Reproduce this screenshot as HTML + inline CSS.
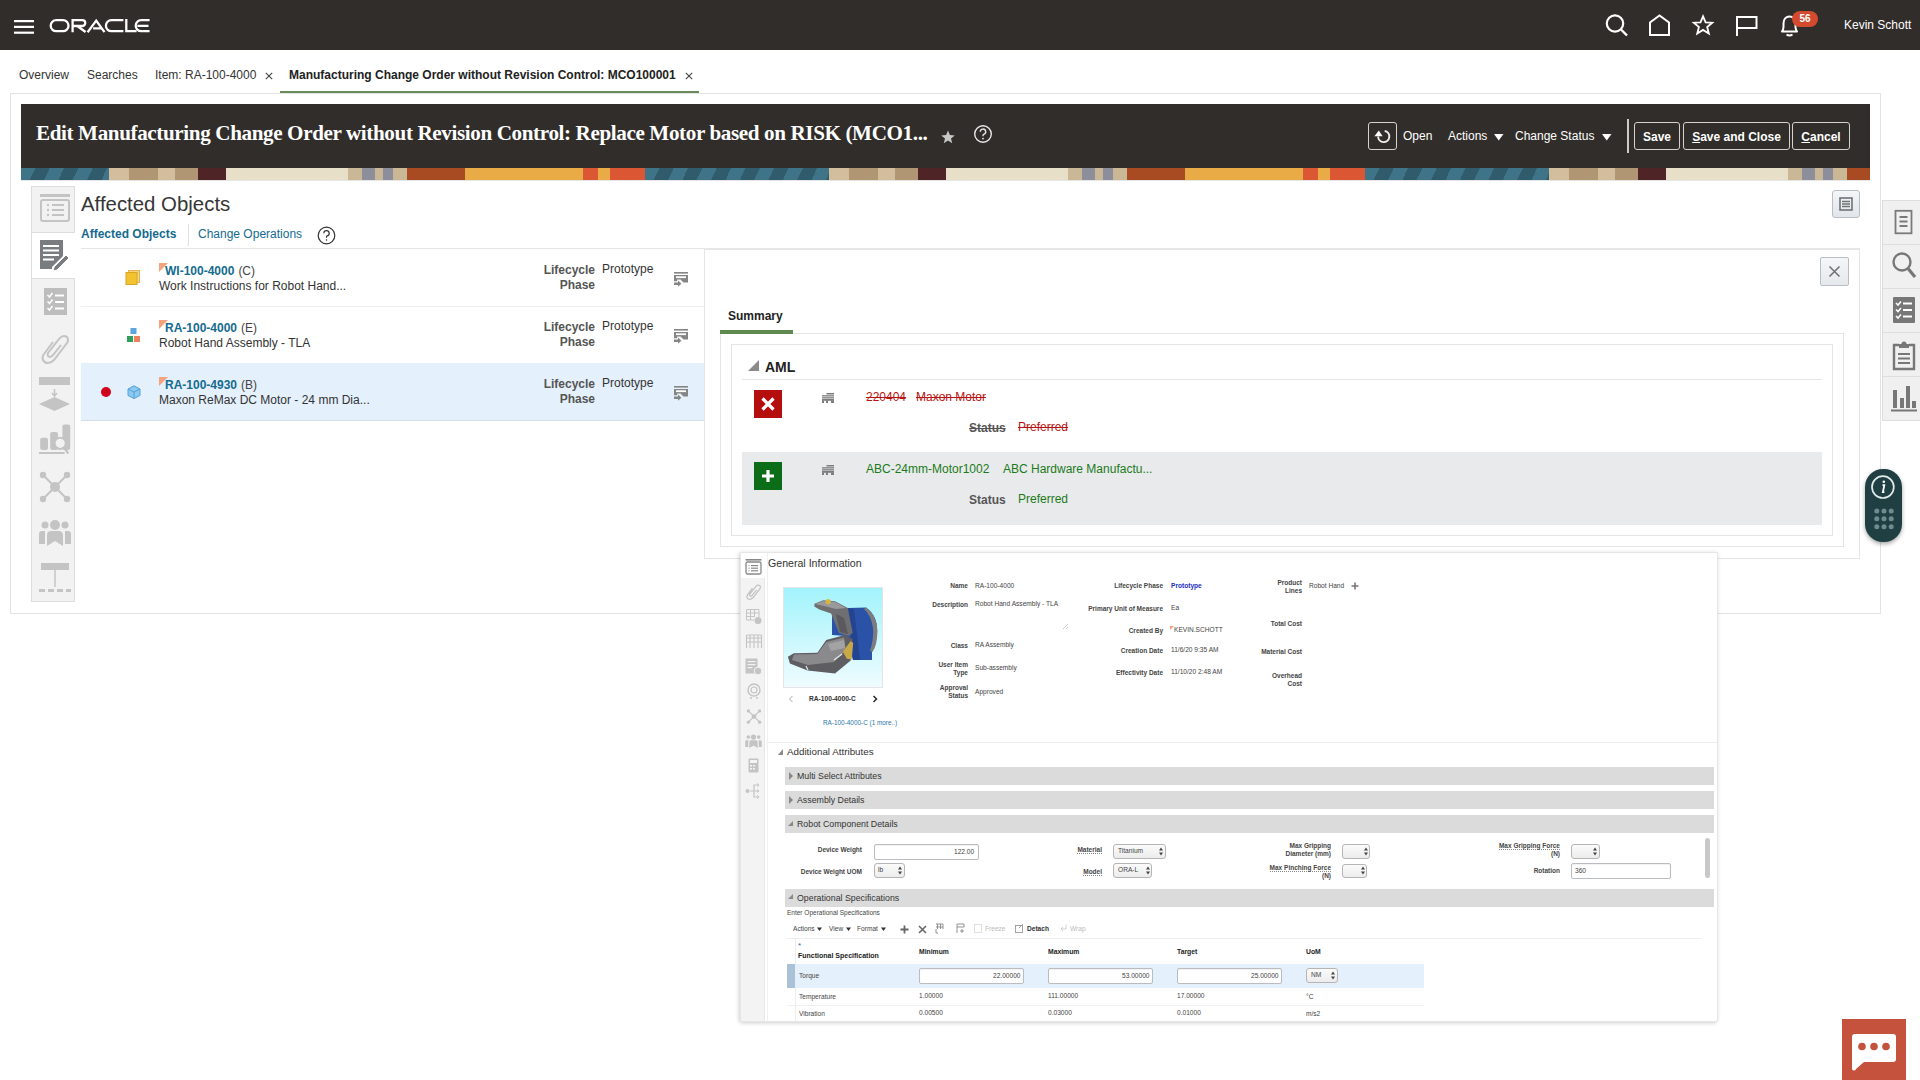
<!DOCTYPE html>
<html><head><meta charset="utf-8">
<style>
*{box-sizing:border-box;margin:0;padding:0}
html,body{width:1920px;height:1080px;overflow:hidden;background:#fff;font-family:"Liberation Sans",sans-serif;color:#333;font-size:12px}
.a{position:absolute;white-space:nowrap}
.b{font-weight:bold}
.lnk{color:#146b8f}
svg{position:absolute;overflow:visible}
.btnd{position:absolute;border:1.5px solid #d6d2cf;border-radius:3px;height:28px;top:122px;color:#fff;font-weight:bold;font-size:12px;text-align:center;line-height:28px}
</style></head><body>
<!-- HEADER -->
<div class="a" style="left:0;top:0;width:1920px;height:50px;background:#312d2a"></div>
<svg style="left:14px;top:20px" width="21" height="14"><rect x="0" y="0" width="20" height="2.2" fill="#fff"/><rect x="0" y="5.8" width="20" height="2.2" fill="#fff"/><rect x="0" y="11.6" width="20" height="2.2" fill="#fff"/></svg>
<svg style="left:44px;top:12px" width="112" height="28" viewBox="44 12 112 28"><g fill="none" stroke="#fff" stroke-width="2.3">
<rect x="50.7" y="20.2" width="17.8" height="11" rx="5.5"/>
<path d="M72.6 32.2V20.1H82.3A2.95 2.95 0 0 1 82.3 26H73.4M77.6 26.2L85.6 32"/>
<path d="M87.6 32.2L96.2 20.6L104.5 32.2M93.1 28.3H102.6" stroke-linejoin="miter" stroke-miterlimit="10"/>
<path d="M123.4 31.2H111.4A5.5 5.5 0 0 1 111.4 20.2H123.4"/>
<path d="M126.3 19V31.2H136.6"/>
<path d="M149.6 31.2H141.2A5.5 5.5 0 0 1 141.2 20.2H149.6M137.4 25.8H148.5"/>
</g></svg>
<svg style="left:1604px;top:13px" width="26" height="24" viewBox="0 0 26 24"><circle cx="11" cy="10.5" r="8.2" fill="none" stroke="#fff" stroke-width="2.2"/><path d="M17 16.5L23 22.5" stroke="#fff" stroke-width="2.4"/></svg>
<svg style="left:1648px;top:13px" width="26" height="24" viewBox="0 0 26 24"><path d="M2 22V9.5L11.5 2.5L21 9.5V22Z" fill="none" stroke="#fff" stroke-width="2"/></svg>
<svg style="left:1691px;top:14px" width="25" height="22" viewBox="0 0 26 24"><path d="M12.5 2.5L15.3 9.2L22.5 9.5L17 14.2L18.8 21.3L12.5 17.3L6.2 21.3L8 14.2L2.5 9.5L9.7 9.2Z" fill="none" stroke="#fff" stroke-width="2" stroke-linejoin="miter"/></svg>
<svg style="left:1734px;top:13px" width="26" height="24" viewBox="0 0 26 24"><path d="M3 23V3M3 4H22.5V15H3" fill="none" stroke="#fff" stroke-width="2"/></svg>
<svg style="left:1778px;top:13px" width="26" height="24" viewBox="0 0 26 24"><path d="M4 18.5C6 16.5 5.5 13 5.5 10.5C5.5 6.5 8 3.5 11.5 3.5C15 3.5 17.5 6.5 17.5 10.5C17.5 13 17 16.5 19 18.5Z" fill="none" stroke="#fff" stroke-width="2" stroke-linejoin="round"/><path d="M8.5 21.5Q11.5 23.5 14.5 21.5" fill="none" stroke="#fff" stroke-width="2"/></svg>
<div class="a" style="left:1792px;top:11px;width:26px;height:16px;border-radius:8px;background:#d34a2f;color:#fff;font:bold 10px 'Liberation Sans',sans-serif;text-align:center;line-height:16px">56</div>
<div class="a" style="left:1844px;top:17.5px;color:#fff;font-size:12px">Kevin Schott</div>
<!-- TABS -->
<div class="a" style="left:19px;top:68px">Overview</div>
<div class="a" style="left:87px;top:68px">Searches</div>
<div class="a" style="left:155px;top:68px">Item: RA-100-4000</div>
<svg style="left:265px;top:72px" width="8" height="8"><path d="M0.8 0.8L7.2 7.2M7.2 0.8L0.8 7.2" stroke="#444" stroke-width="1.1"/></svg>
<div class="a b" style="left:289px;top:68px;color:#222">Manufacturing Change Order without Revision Control: MCO100001</div>
<svg style="left:685px;top:72px" width="8" height="8"><path d="M0.8 0.8L7.2 7.2M7.2 0.8L0.8 7.2" stroke="#444" stroke-width="1.1"/></svg>
<div class="a" style="left:280px;top:91px;width:419px;height:3px;background:#6a8a5a"></div>
<!-- container -->
<div class="a" style="left:10px;top:93px;width:1871px;height:521px;border:1px solid #e0e2e4"></div>
<!-- title bar -->
<div class="a" style="left:21px;top:104px;width:1849px;height:64px;background:#312d2a"></div>
<div class="a" style="left:21px;top:168px;width:1849px;height:12px;background:repeating-linear-gradient(90deg,#3f7488 0,#3f7488 184px,#d2be9c 184px,#d2be9c 204px,#b09673 204px,#b09673 233px,#d2be9c 233px,#d2be9c 250px,#b09673 250px,#b09673 273px,#4e2426 273px,#4e2426 301px,#e8dfc8 301px,#e8dfc8 423px,#c9b796 423px,#c9b796 437px,#8d8e9b 437px,#8d8e9b 450px,#c9b796 450px,#c9b796 458px,#8d8e9b 458px,#8d8e9b 468px,#c9b796 468px,#c9b796 482px,#a84a22 482px,#a84a22 540px,#e9ab46 540px,#e9ab46 658px,#db5733 658px,#db5733 673px,#e9ab46 673px,#e9ab46 685px,#db5733 685px,#db5733 720px);background-position:-96px 0;background-size:720px 12px"></div>
<div class="a" style="left:21px;top:168px;width:88px;height:12px;background:repeating-linear-gradient(115deg,rgba(20,40,50,0) 0,rgba(20,40,50,0) 13px,rgba(20,45,55,.35) 13px,rgba(20,45,55,.35) 26px)"></div><div class="a" style="left:645px;top:168px;width:184px;height:12px;background:repeating-linear-gradient(115deg,rgba(20,40,50,0) 0,rgba(20,40,50,0) 13px,rgba(20,45,55,.35) 13px,rgba(20,45,55,.35) 26px)"></div><div class="a" style="left:1365px;top:168px;width:184px;height:12px;background:repeating-linear-gradient(115deg,rgba(20,40,50,0) 0,rgba(20,40,50,0) 13px,rgba(20,45,55,.35) 13px,rgba(20,45,55,.35) 26px)"></div>
<div class="a" style="left:21px;top:180px;width:1849px;height:1px;background:#e6e6e6"></div>
<div class="a" style="left:36px;top:120px;font:bold 22px 'Liberation Serif',serif;letter-spacing:-0.4px;color:#fff;transform:scaleX(0.96);transform-origin:0 0">Edit Manufacturing Change Order without Revision Control: Replace Motor based on RISK (MCO1...</div>
<svg style="left:940px;top:129px" width="16" height="16" viewBox="0 0 16 16"><path d="M8 1.5L9.9 6.1L14.8 6.4L11 9.5L12.2 14.3L8 11.6L3.8 14.3L5 9.5L1.2 6.4L6.1 6.1Z" fill="#c8c8c8"/></svg>
<svg style="left:973px;top:124px" width="20" height="20" viewBox="0 0 20 20"><circle cx="10" cy="10" r="8.3" fill="none" stroke="#e8e8e8" stroke-width="1.4"/><path d="M7.3 7.8A2.7 2.7 0 1 1 10.6 10.4C10 10.7 10 11.2 10 12.2" fill="none" stroke="#e8e8e8" stroke-width="1.4"/><circle cx="10" cy="14.6" r="0.9" fill="#e8e8e8"/></svg>
<!-- toolbar -->
<div class="btnd" style="left:1368px;width:29px"></div>
<svg style="left:1372px;top:126px" width="24" height="22" viewBox="0 0 24 22"><path d="M12.7 5A5.6 5.6 0 1 1 6.1 10.6" fill="none" stroke="#f0eeec" stroke-width="1.9"/><path d="M6.8 4.6L2.4 10.2H10.6Z" fill="#fff"/></svg>
<div class="a" style="left:1403px;top:129px;color:#fff">Open</div>
<div class="a" style="left:1448px;top:129px;color:#fff">Actions</div>
<svg style="left:1494px;top:134px" width="10" height="7"><path d="M0 0H9.5L4.75 6.5Z" fill="#fff"/></svg>
<div class="a" style="left:1515px;top:129px;color:#fff">Change Status</div>
<svg style="left:1602px;top:134px" width="10" height="7"><path d="M0 0H9.5L4.75 6.5Z" fill="#fff"/></svg>
<div class="a" style="left:1627px;top:119px;width:1.5px;height:34px;background:#cfcac6"></div>
<div class="btnd" style="left:1634px;width:46px">Save</div>
<div class="btnd" style="left:1683px;width:107px"><u>S</u>ave and Close</div>
<div class="btnd" style="left:1792px;width:58px"><u>C</u>ancel</div>
<!-- LEFT RAIL -->
<div class="a" style="left:31px;top:186px;width:44px;height:416px;background:#f2f2f2;border:1px solid #dddddd"></div>
<div class="a" style="left:31px;top:232px;width:44px;height:47px;background:#fff;border:1px solid #dddddd;border-right:none"></div>
<svg style="left:39px;top:194px" width="32" height="30" viewBox="0 0 32 30"><rect x="1" y="0" width="30" height="3" fill="#c4c4c4"/><rect x="2" y="6" width="28" height="21" rx="2" fill="none" stroke="#c4c4c4" stroke-width="2"/><g fill="#c4c4c4"><circle cx="9" cy="11" r="1.2"/><circle cx="9" cy="16" r="1.2"/><circle cx="9" cy="21" r="1.2"/><rect x="13" y="10" width="12" height="2"/><rect x="13" y="15" width="12" height="2"/><rect x="13" y="20" width="12" height="2"/></g></svg>
<svg style="left:40px;top:240px" width="30" height="31" viewBox="0 0 30 31"><path d="M0 0H23V16L12 27V29H0Z" fill="#7a7d80"/><g fill="#fff"><rect x="3" y="5" width="16" height="2"/><rect x="3" y="9.5" width="16" height="2"/><rect x="3" y="14" width="16" height="2"/><rect x="3" y="18.5" width="11" height="2"/></g><path d="M14 27L26 15L29 18L17 30L13 31Z" fill="#7a7d80" stroke="#fff" stroke-width="1"/></svg>
<svg style="left:44px;top:288px" width="24" height="28" viewBox="0 0 24 28"><rect x="0" y="0" width="23" height="27" fill="#bdbdbd"/><g stroke="#fff" stroke-width="1.6" fill="none"><path d="M3.5 7L5.5 9L8.5 5M3.5 13.5L5.5 15.5L8.5 11.5M3.5 20L5.5 22L8.5 18"/></g><g fill="#fff"><rect x="11" y="6.5" width="9" height="2"/><rect x="11" y="13" width="9" height="2"/><rect x="11" y="19.5" width="9" height="2"/></g></svg>
<svg style="left:39px;top:334px" width="32" height="32" viewBox="0 0 32 32"><path d="M14 8L5 20C2 24 4 29 9 29C12 29 14 27 15 26L28 9C30 6 29 2 25 2C22 2 21 4 20 5L9 19C8 21 9 23 11 23C12 23 13 22 14 21L22 11" fill="none" stroke="#c4c4c4" stroke-width="2"/></svg>
<svg style="left:39px;top:377px" width="32" height="34" viewBox="0 0 32 34"><rect x="0" y="0" width="31" height="8" fill="#c4c4c4"/><path d="M15.5 12V18M13 16L15.5 19L18 16" stroke="#c4c4c4" stroke-width="1.5" fill="none"/><path d="M0 27L15.5 20L31 27L15.5 34Z" fill="#c4c4c4"/></svg>
<svg style="left:39px;top:424px" width="32" height="32" viewBox="0 0 32 32"><g fill="#c4c4c4"><rect x="1.2" y="13.8" width="7.8" height="12.2" rx="2"/><rect x="11.2" y="8" width="7.8" height="18" rx="2"/><rect x="23.4" y="0.4" width="7.8" height="25.6" rx="2"/><rect x="0" y="28" width="25.6" height="2"/></g><circle cx="21.2" cy="19.3" r="5.6" fill="#f2f2f2" stroke="#c4c4c4" stroke-width="2"/><path d="M25 23.5L29.3 29.5" stroke="#c4c4c4" stroke-width="2.2"/></svg>
<svg style="left:39px;top:471px" width="32" height="32" viewBox="0 0 32 32"><g fill="#c4c4c4"><circle cx="16" cy="16" r="5"/><circle cx="4" cy="4" r="3.2"/><circle cx="28" cy="4" r="3.2"/><circle cx="4" cy="28" r="3.2"/><circle cx="28" cy="28" r="3.2"/></g><path d="M4 4L28 28M28 4L4 28" stroke="#c4c4c4" stroke-width="2"/></svg>
<svg style="left:39px;top:519px" width="32" height="27" viewBox="0 0 32 27"><g fill="#c4c4c4"><circle cx="16" cy="6" r="5"/><circle cx="6" cy="6" r="3.5"/><circle cx="26" cy="6" r="3.5"/><path d="M8 27V16C8 13 10 12 12 12H20C22 12 24 13 24 16V27L16 22Z"/><path d="M0 25V15C0 13 1 12 3 12H6V25Z"/><path d="M32 25V15C32 13 31 12 29 12H26V25Z"/></g></svg>
<svg style="left:39px;top:563px" width="32" height="31" viewBox="0 0 32 31"><rect x="2" y="0" width="28" height="7" fill="#c4c4c4"/><path d="M16 7V24" stroke="#c4c4c4" stroke-width="1.5"/><g fill="#c4c4c4"><rect x="0" y="26" width="6" height="3"/><rect x="9" y="26" width="6" height="3"/><rect x="18" y="26" width="6" height="3"/><rect x="27" y="26" width="5" height="3"/></g></svg>
<!-- heading + subtabs -->
<div class="a" style="left:81px;top:193px;font-size:20.4px;color:#363636">Affected Objects</div>
<div class="a b lnk" style="left:81px;top:227px">Affected Objects</div>
<div class="a" style="left:188px;top:224px;width:1px;height:22px;background:#e0e0e0"></div>
<div class="a lnk" style="left:198px;top:227px">Change Operations</div>
<svg style="left:317px;top:226px" width="19" height="19" viewBox="0 0 19 19"><circle cx="9.5" cy="9.5" r="8.3" fill="none" stroke="#333" stroke-width="1.2"/><path d="M6.8 7.3A2.7 2.7 0 1 1 10.1 9.9C9.5 10.2 9.5 10.7 9.5 11.7" fill="none" stroke="#333" stroke-width="1.2"/><circle cx="9.5" cy="14" r="0.8" fill="#333"/></svg>
<div class="a" style="left:81px;top:248px;width:1779px;height:1px;background:#e4e6e8"></div>
<!-- list rows -->
<div class="a" style="left:81px;top:306px;width:623px;height:1px;background:#eceeef"></div>
<div class="a" style="left:81px;top:363px;width:623px;height:58px;background:#e4f0fc;border-bottom:1px solid #d4dde6"></div>
<svg style="left:126px;top:270px" width="14" height="15" viewBox="0 0 14 15"><rect x="2.5" y="0.5" width="11" height="12" fill="#f3d58a" stroke="#e0b54c"/><rect x="0" y="2.5" width="11" height="12" fill="#f2c230" stroke="#d9a623"/></svg>
<svg style="left:126px;top:328px" width="15" height="15" viewBox="0 0 15 15"><rect x="4.5" y="0" width="6" height="6" fill="#5aa6de"/><rect x="1" y="8" width="6" height="6" fill="#2e9e5a"/><rect x="8" y="8" width="6" height="6" fill="#e9835f"/></svg>
<div class="a" style="left:101px;top:387px;width:10px;height:10px;border-radius:5px;background:#d0021b"></div>
<svg style="left:127px;top:385px" width="14" height="14" viewBox="0 0 14 14"><path d="M7 0.8L13 4V10.5L7 13.5L1 10.5V4Z" fill="#8cc8f0" stroke="#4fa3da" stroke-width="1"/><path d="M1 4L7 7L13 4M7 7V13.5" fill="none" stroke="#4fa3da" stroke-width="1"/></svg>
<svg style="left:159px;top:263px" width="9" height="9"><path d="M0 0H9L0 9Z" fill="#f4a37a"/></svg>
<svg style="left:159px;top:320px" width="9" height="9"><path d="M0 0H9L0 9Z" fill="#f4a37a"/></svg>
<svg style="left:159px;top:377px" width="9" height="9"><path d="M0 0H9L0 9Z" fill="#f4a37a"/></svg>
<div class="a" style="left:165px;top:264px"><span class="b lnk">WI-100-4000</span><span style="margin-left:4px;color:#444">(C)</span></div>
<div class="a" style="left:159px;top:279px">Work Instructions for Robot Hand...</div>
<div class="a" style="left:165px;top:321px"><span class="b lnk">RA-100-4000</span><span style="margin-left:4px;color:#444">(E)</span></div>
<div class="a" style="left:159px;top:336px">Robot Hand Assembly - TLA</div>
<div class="a" style="left:165px;top:378px"><span class="b lnk">RA-100-4930</span><span style="margin-left:4px;color:#444">(B)</span></div>
<div class="a" style="left:159px;top:393px">Maxon ReMax DC Motor - 24 mm Dia...</div>
<div class="a b" style="left:543px;top:263px;color:#555;text-align:right;width:52px;line-height:15px;white-space:normal">Lifecycle Phase</div>
<div class="a" style="left:602px;top:262px">Prototype</div>
<div class="a b" style="left:543px;top:320px;color:#555;text-align:right;width:52px;line-height:15px;white-space:normal">Lifecycle Phase</div>
<div class="a" style="left:602px;top:319px">Prototype</div>
<div class="a b" style="left:543px;top:377px;color:#555;text-align:right;width:52px;line-height:15px;white-space:normal">Lifecycle Phase</div>
<div class="a" style="left:602px;top:376px">Prototype</div>
<svg style="left:674px;top:272px" width="14" height="15" viewBox="0 0 14 15"><g fill="#858585"><rect x="0" y="0" width="14" height="1.6"/><path d="M0 3H14V10.5H9.5L6.5 7.6H3.2V9.2H0Z"/><path d="M0 10.6H4V8.6L7.4 11.8L4 14.8V12.9H0Z"/></g><rect x="2" y="4.3" width="10" height="1.8" fill="#fff"/></svg>
<svg style="left:674px;top:329px" width="14" height="15" viewBox="0 0 14 15"><g fill="#858585"><rect x="0" y="0" width="14" height="1.6"/><path d="M0 3H14V10.5H9.5L6.5 7.6H3.2V9.2H0Z"/><path d="M0 10.6H4V8.6L7.4 11.8L4 14.8V12.9H0Z"/></g><rect x="2" y="4.3" width="10" height="1.8" fill="#fff"/></svg>
<svg style="left:674px;top:386px" width="14" height="15" viewBox="0 0 14 15"><g fill="#858585"><rect x="0" y="0" width="14" height="1.6"/><path d="M0 3H14V10.5H9.5L6.5 7.6H3.2V9.2H0Z"/><path d="M0 10.6H4V8.6L7.4 11.8L4 14.8V12.9H0Z"/></g><rect x="2" y="4.3" width="10" height="1.8" fill="#fff"/></svg>
<!-- detail panel -->
<div class="a" style="left:704px;top:249px;width:1156px;height:310px;border:1px solid #e3e5e7;border-bottom-color:#e3e5e7"></div>
<div class="a" style="left:1820px;top:257px;width:29px;height:29px;border:1px solid #b7bec6;border-radius:2px;background:linear-gradient(#f4f6f8,#e6e9ec)"></div>
<svg style="left:1828px;top:265px" width="13" height="13"><path d="M1.5 1.5L11.5 11.5M11.5 1.5L1.5 11.5" stroke="#6f7378" stroke-width="1.6"/></svg>
<div class="a b" style="left:728px;top:309px;color:#222">Summary</div>
<div class="a" style="left:720px;top:333px;width:1124px;height:214px;border:1px solid #e3e5e7"></div>
<div class="a" style="left:720px;top:330px;width:73px;height:4px;background:#5f8a4f"></div>
<div class="a" style="left:731px;top:344px;width:1102px;height:192px;border:1px solid #e3e5e7"></div>
<svg style="left:748px;top:360px" width="12" height="11"><path d="M11 0V11H0Z" fill="#8a8a8a"/></svg>
<div class="a b" style="left:765px;top:359px;font-size:14px;color:#222">AML</div>
<div class="a" style="left:742px;top:379px;width:1080px;height:1px;background:#e3e5e7"></div>
<div class="a" style="left:754px;top:390px;width:28px;height:28px;background:#b50e0e"></div>
<svg style="left:760px;top:396px" width="16" height="16"><path d="M2.5 2.5L13.5 13.5M13.5 2.5L2.5 13.5" stroke="#fff" stroke-width="3.2"/></svg>
<svg style="left:822px;top:393px" width="12" height="10" viewBox="0 0 12 10"><g fill="#7d7d7d"><rect x="4.5" y="0" width="7.5" height="1.5"/><rect x="0" y="2.2" width="12" height="1.3"/><rect x="0" y="4.2" width="12" height="1.3"/><rect x="0" y="6" width="12" height="1.8"/><rect x="0" y="7.5" width="2" height="2.5"/><rect x="4" y="7.5" width="2" height="2.5"/><rect x="9" y="7.5" width="3" height="2.5"/></g></svg>
<div class="a" style="left:866px;top:390px;color:#b81414;text-decoration:line-through">220404</div>
<div class="a" style="left:916px;top:390px;color:#b81414;text-decoration:line-through">Maxon Motor</div>
<div class="a b" style="left:969px;top:421px;color:#555;text-decoration:line-through">Status</div>
<div class="a" style="left:1018px;top:420px;color:#b81414;text-decoration:line-through">Preferred</div>
<div class="a" style="left:742px;top:452px;width:1080px;height:73px;background:#e9eaec"></div>
<div class="a" style="left:754px;top:462px;width:28px;height:28px;background:#0b6d18"></div>
<svg style="left:760px;top:468px" width="16" height="16"><path d="M8 2V14M2 8H14" stroke="#fff" stroke-width="3.2"/></svg>
<svg style="left:822px;top:465px" width="12" height="10" viewBox="0 0 12 10"><g fill="#7d7d7d"><rect x="4.5" y="0" width="7.5" height="1.5"/><rect x="0" y="2.2" width="12" height="1.3"/><rect x="0" y="4.2" width="12" height="1.3"/><rect x="0" y="6" width="12" height="1.8"/><rect x="0" y="7.5" width="2" height="2.5"/><rect x="4" y="7.5" width="2" height="2.5"/><rect x="9" y="7.5" width="3" height="2.5"/></g></svg>
<div class="a" style="left:866px;top:462px;color:#1a7b1a">ABC-24mm-Motor1002</div>
<div class="a" style="left:1003px;top:462px;color:#1a7b1a">ABC Hardware Manufactu...</div>
<div class="a b" style="left:969px;top:493px;color:#555">Status</div>
<div class="a" style="left:1018px;top:492px;color:#1a7b1a">Preferred</div>
<!-- layout button -->
<div class="a" style="left:1832px;top:190px;width:28px;height:28px;border:1px solid #b7bec6;border-radius:3px;background:linear-gradient(#f4f6f8,#e2e6ea)"></div>
<svg style="left:1839px;top:197px" width="14" height="14" viewBox="0 0 14 14"><rect x="1" y="1" width="12" height="12" fill="none" stroke="#6f7378" stroke-width="1.6"/><path d="M3 4.5H11M3 7H11M3 9.5H11" stroke="#6f7378" stroke-width="1.4"/></svg>
<!-- right rail -->
<div class="a" style="left:1882px;top:200px;width:40px;height:221px;background:#f0f0f0;border:1px solid #dedede"></div>
<div class="a" style="left:1882px;top:244px;width:40px;height:1px;background:#dedede"></div>
<div class="a" style="left:1882px;top:288px;width:40px;height:1px;background:#dedede"></div>
<div class="a" style="left:1882px;top:332px;width:40px;height:1px;background:#dedede"></div>
<div class="a" style="left:1882px;top:376px;width:40px;height:1px;background:#dedede"></div>
<svg style="left:1892px;top:209px" width="22" height="26" viewBox="0 0 22 26"><rect x="3.5" y="1.8" width="16" height="22.5" fill="none" stroke="#7a7a7a" stroke-width="1.8"/><path d="M7.5 8H15.5M7.5 12.5H15.5M7.5 17H15.5" stroke="#7a7a7a" stroke-width="1.8"/></svg>
<svg style="left:1891px;top:251px" width="28" height="30" viewBox="0 0 28 30"><circle cx="11" cy="11" r="8.5" fill="none" stroke="#777" stroke-width="2.4"/><path d="M17 17.5L24 26" stroke="#777" stroke-width="3.2"/></svg>
<svg style="left:1893px;top:297px" width="22" height="26" viewBox="0 0 22 26"><rect x="0" y="0" width="22" height="26" rx="1" fill="#777"/><g stroke="#fff" stroke-width="1.6" fill="none"><path d="M3 6L5 8L8 4.5M3 12.5L5 14.5L8 11M3 19L5 21L8 17.5"/></g><g fill="#fff"><rect x="10" y="5.5" width="9" height="2"/><rect x="10" y="12" width="9" height="2"/><rect x="10" y="18.5" width="9" height="2"/></g></svg>
<svg style="left:1891px;top:340px" width="26" height="30" viewBox="0 0 26 30"><path d="M8 5H3V29H23V5H18" fill="none" stroke="#777" stroke-width="2.4"/><path d="M8 8V4H10.5A2.5 2.5 0 0 1 15.5 4H18V8Z" fill="#777"/><path d="M7 14H19M7 18.5H19M7 23H19" stroke="#777" stroke-width="2"/></svg>
<svg style="left:1891px;top:384px" width="26" height="28" viewBox="0 0 26 28"><g fill="#777"><rect x="2" y="6" width="4" height="18"/><rect x="9" y="14" width="4" height="10"/><rect x="15" y="2" width="4" height="22"/><rect x="21" y="17" width="4" height="7"/><rect x="0" y="25.5" width="26" height="2"/></g></svg>
<!-- info pill -->
<div class="a" style="left:1865px;top:469px;width:37px;height:73px;border-radius:18px;background:#1f3f43;box-shadow:0 2px 4px rgba(0,0,0,.35)"></div>
<svg style="left:1871px;top:475px" width="24" height="24" viewBox="0 0 24 24"><circle cx="11.9" cy="12.1" r="10.9" fill="none" stroke="#dfeaea" stroke-width="1.7"/><circle cx="12.8" cy="6.8" r="1.3" fill="#fff"/><path d="M11.5 10.2H13.3L11.9 17.2H13.4" fill="none" stroke="#fff" stroke-width="1.8"/></svg>
<svg style="left:1874px;top:507.5px" width="20" height="22" viewBox="0 0 20 22"><g fill="#6f8b8d"><circle cx="2.8" cy="2.9" r="2.5"/><circle cx="10" cy="2.9" r="2.5"/><circle cx="17.2" cy="2.9" r="2.5"/><circle cx="2.8" cy="10.7" r="2.5"/><circle cx="10" cy="10.7" r="2.5"/><circle cx="17.2" cy="10.7" r="2.5"/><circle cx="2.8" cy="18.7" r="2.5"/><circle cx="10" cy="18.7" r="2.5"/><circle cx="17.2" cy="18.7" r="2.5"/></g></svg>
<!-- chat -->
<div class="a" style="left:1842px;top:1019px;width:64px;height:61px;background:#c4523c"></div>
<svg style="left:1851px;top:1034px" width="46" height="36" viewBox="0 0 46 36"><path d="M3 0H42A3 3 0 0 1 45 3V25A3 3 0 0 1 42 28H13L5 35A2 2 0 0 1 1 34V3A3 3 0 0 1 3 0Z" fill="#fff"/><g fill="#c4523c"><circle cx="11" cy="12.5" r="3.8"/><circle cx="23" cy="12.5" r="3.8"/><circle cx="35" cy="12.5" r="3.8"/></g></svg>
<!-- OVERLAY SCREENSHOT -->
<style>
.ov{font-size:6.6px;color:#333}
.lb{position:absolute;white-space:nowrap;font-weight:bold;font-size:6.5px;color:#444;text-align:right;line-height:8px}
.vl{position:absolute;white-space:nowrap;font-size:6.6px;color:#444}
.bar{position:absolute;left:785px;width:929px;height:18px;background:#dbdbdb}
.bar span{position:absolute;left:12px;top:3.5px;font-size:8.8px;color:#333}
.inp{position:absolute;border:1px solid #b9bcc0;border-radius:2px;background:#fff;box-shadow:inset 0 1px 1px rgba(0,0,0,.06)}
.sel{position:absolute;border:1px solid #b5b5b5;border-radius:3px;background:linear-gradient(#fbfbfb,#ececec)}
.oi{fill:#c9c9c9}
</style>
<div class="a" style="left:740px;top:552px;width:978px;height:470px;background:#fff;border:1px solid #e6e6e6;box-shadow:-1px 1px 4px rgba(0,0,0,.2);border-radius:0 0 3px 4px"></div>
<div class="a" style="left:741px;top:578px;width:24px;height:443px;background:#f3f3f3;border-right:1px solid #e8e8e8"></div>
<div class="a" style="left:767px;top:553px;width:1px;height:468px;background:#f0f0f0"></div>
<svg style="left:745px;top:559px" width="17" height="16" viewBox="0 0 17 16"><rect x="0.5" y="0" width="16" height="1.6" fill="#888"/><rect x="1" y="3" width="15" height="12" rx="1.5" fill="none" stroke="#888" stroke-width="1.3"/><g fill="#888"><rect x="6" y="6" width="7" height="1.2"/><rect x="6" y="8.6" width="7" height="1.2"/><rect x="6" y="11.2" width="7" height="1.2"/><circle cx="4" cy="6.6" r=".6"/><circle cx="4" cy="9.2" r=".6"/><circle cx="4" cy="11.8" r=".6"/></g></svg>
<svg style="left:745px;top:584px" width="17" height="17" viewBox="0 0 32 32"><path d="M14 8L5 20C2 24 4 29 9 29C12 29 14 27 15 26L28 9C30 6 29 2 25 2C22 2 21 4 20 5L9 19C8 21 9 23 11 23C12 23 13 22 14 21L22 11" fill="none" stroke="#c4c4c4" stroke-width="2.5"/></svg>
<svg style="left:746px;top:609px" width="16" height="15" viewBox="0 0 16 15"><path d="M0.5 0.5H13V8M0.5 0.5V11H8M0.5 4H13M0.5 7.5H8M4.5 0.5V11M8.5 0.5V8" fill="none" stroke="#c4c4c4" stroke-width="1"/><circle cx="12" cy="11.5" r="3.5" fill="#c4c4c4"/></svg>
<svg style="left:746px;top:634px" width="16" height="15" viewBox="0 0 16 15"><path d="M0.5 4H15.5M0.5 8H15.5M4 1V14M8 1V14M12 1V14M0.5 1V14M15.5 1V14M0.5 1H15.5" fill="none" stroke="#c4c4c4" stroke-width="1.1"/></svg>
<svg style="left:745px;top:658px" width="17" height="17" viewBox="0 0 17 17"><rect x="0.5" y="0.5" width="12" height="15" fill="#c4c4c4"/><g fill="#f3f3f3"><rect x="2.5" y="3" width="8" height="1.2"/><rect x="2.5" y="6" width="8" height="1.2"/><rect x="2.5" y="9" width="5" height="1.2"/></g><circle cx="13" cy="13" r="3.8" fill="#c4c4c4" stroke="#f3f3f3" stroke-width="1"/></svg>
<svg style="left:746px;top:683px" width="16" height="16" viewBox="0 0 16 16"><circle cx="8" cy="7" r="6" fill="none" stroke="#c4c4c4" stroke-width="1.4"/><circle cx="8" cy="7" r="3" fill="none" stroke="#c4c4c4" stroke-width="1.2"/><circle cx="5" cy="15" r="1" fill="#c4c4c4"/><circle cx="11" cy="15" r="1" fill="#c4c4c4"/></svg>
<svg style="left:746px;top:709px" width="16" height="15" viewBox="0 0 32 32"><g fill="#c4c4c4"><circle cx="16" cy="16" r="5"/><circle cx="4" cy="4" r="3.5"/><circle cx="28" cy="4" r="3.5"/><circle cx="4" cy="28" r="3.5"/><circle cx="28" cy="28" r="3.5"/></g><path d="M4 4L28 28M28 4L4 28" stroke="#c4c4c4" stroke-width="2.5"/></svg>
<svg style="left:745px;top:734px" width="17" height="14" viewBox="0 0 32 27"><g fill="#c4c4c4"><circle cx="16" cy="6" r="5"/><circle cx="6" cy="6" r="3.5"/><circle cx="26" cy="6" r="3.5"/><path d="M8 27V16C8 13 10 12 12 12H20C22 12 24 13 24 16V27L16 22Z"/><path d="M0 25V15C0 13 1 12 3 12H6V25Z"/><path d="M32 25V15C32 13 31 12 29 12H26V25Z"/></g></svg>
<svg style="left:748px;top:758px" width="11" height="15" viewBox="0 0 11 15"><rect x="0.5" y="0.5" width="10" height="14" rx="1" fill="#c4c4c4"/><rect x="2" y="2" width="7" height="3" fill="#f3f3f3"/><g fill="#f3f3f3"><rect x="2" y="7" width="2" height="1.5"/><rect x="5" y="7" width="2" height="1.5"/><rect x="2" y="10" width="2" height="1.5"/><rect x="5" y="10" width="2" height="1.5"/></g></svg>
<svg style="left:745px;top:783px" width="17" height="16" viewBox="0 0 17 16"><circle cx="2.5" cy="8" r="2" fill="#c4c4c4"/><path d="M13 2H9V14H13M9 8H14M5 8H9" fill="none" stroke="#c4c4c4" stroke-width="1.2"/><path d="M12 0.5L14 2L12 3.5M12 12.5L14 14L12 15.5M12 6.5L14 8L12 9.5" fill="none" stroke="#c4c4c4" stroke-width="1"/></svg>
<div class="a" style="left:768px;top:557px;font-size:10.6px;color:#333">General Information</div>
<!-- image -->
<div class="a" style="left:783px;top:587px;width:100px;height:101px;border:1px solid #e5e5e5;background:linear-gradient(#a2f3fc,#effcff)"></div>
<svg style="left:784px;top:588px" width="98" height="99" viewBox="0 0 98 99">
<path d="M48 28L64 20L82 19.5Q94 28 93 44Q92 58 88 63V72L69 72L62 48L48 47Z" fill="#2a52a6"/>
<path d="M82 19.5Q93 27 93.5 43Q93 58 88.5 64L86 63Q90 50 89 40Q87 27 80 21Z" fill="#7d7d80"/>
<path d="M64 20L70 21L76 72H69Z" fill="#234490"/>
<path d="M30.4 15.7L39.3 12.3L51 13.2L63.8 20.1L68.7 45.1L64.8 48L55 45.1L47.1 25.5L35.3 21.6L30.4 18.6Z" fill="#6f6f72"/>
<path d="M31 16L39.3 13L51 14L62 20L52 21L40 18Z" fill="#9a9a9c"/>
<path d="M52 26L60 30L64 46L56 44Z" fill="#5a5a5e"/>
<circle cx="44.2" cy="13.7" r="2.6" fill="#d8b640"/>
<path d="M3.9 68.7L9.8 65.3L33.4 64.8L42.2 52L60.8 47.1L68.7 51L66.7 72.6L51 85.4L23.6 82.4L5.9 75.6Z" fill="#5e5e62"/>
<path d="M10 66.5L33.4 66L42.2 54L60 49.5L62 62L50 74L24 77L8 72Z" fill="#8a8a8d"/>
<path d="M44 56L60 52L61 60L47 63Z" fill="#a3a3a6"/>
<path d="M58.9 63.8L66.7 53L69.2 55L67.7 71.6L62.8 70.8Z" fill="#c9a848"/>
<path d="M22 78L24 82M50 72L58 66" stroke="#e8e8e8" stroke-width="1.2"/>
</svg>
<svg style="left:788px;top:695px" width="6" height="8"><path d="M4.5 1L1.5 4L4.5 7" fill="none" stroke="#ccc" stroke-width="1.2"/></svg>
<div class="a b" style="left:809px;top:695px;font-size:6.65px;color:#333">RA-100-4000-C</div>
<svg style="left:872px;top:695px" width="6" height="8"><path d="M1.5 1L4.5 4L1.5 7" fill="none" stroke="#222" stroke-width="1.4"/></svg>
<div class="a lnk" style="left:823px;top:719px;font-size:6.4px;color:#2a78a6">RA-100-4000-C (1 more..)</div>
<div class="a" style="left:768px;top:742px;width:949px;height:1px;background:#eeeeee"></div>
<!-- col1 -->
<div class="lb" style="left:900px;width:68px;top:582px">Name</div>
<div class="vl" style="left:975px;top:582px">RA-100-4000</div>
<div class="lb" style="left:900px;width:68px;top:601px">Description</div>
<div class="vl" style="left:975px;top:600px">Robot Hand Assembly - TLA</div>
<svg style="left:1063px;top:624px" width="6" height="6"><path d="M5 0L0 5M5 3L3 5" stroke="#bbb" stroke-width=".8"/></svg>
<div class="lb" style="left:900px;width:68px;top:642px">Class</div>
<div class="vl" style="left:975px;top:641px">RA Assembly</div>
<div class="lb" style="left:900px;width:68px;top:661px">User Item<br>Type</div>
<div class="vl" style="left:975px;top:664px">Sub-assembly</div>
<div class="lb" style="left:900px;width:68px;top:684px">Approval<br>Status</div>
<div class="vl" style="left:975px;top:688px">Approved</div>
<!-- col2 -->
<div class="lb" style="left:1059px;width:104px;top:582px">Lifecycle Phase</div>
<div class="vl b" style="left:1171px;top:582px;color:#1d2fc4">Prototype</div>
<div class="lb" style="left:1059px;width:104px;top:605px">Primary Unit of Measure</div>
<div class="vl" style="left:1171px;top:604px">Ea</div>
<div class="lb" style="left:1059px;width:104px;top:627px">Created By</div>
<svg style="left:1170px;top:626px" width="4" height="4"><path d="M0 0H4L0 4Z" fill="#f4a37a"/></svg>
<div class="vl" style="left:1174px;top:626px">KEVIN.SCHOTT</div>
<div class="lb" style="left:1059px;width:104px;top:647px">Creation Date</div>
<div class="vl" style="left:1171px;top:646px">11/6/20 9:35 AM</div>
<div class="lb" style="left:1059px;width:104px;top:669px">Effectivity Date</div>
<div class="vl" style="left:1171px;top:668px">11/10/20 2:48 AM</div>
<!-- col3 -->
<div class="lb" style="left:1230px;width:72px;top:579px">Product<br>Lines</div>
<div class="vl" style="left:1309px;top:582px">Robot Hand</div>
<svg style="left:1351px;top:582px" width="8" height="8"><path d="M4 0.5V7.5M0.5 4H7.5" stroke="#777" stroke-width="1.6"/></svg>
<div class="lb" style="left:1230px;width:72px;top:620px">Total Cost</div>
<div class="lb" style="left:1230px;width:72px;top:648px">Material Cost</div>
<div class="lb" style="left:1230px;width:72px;top:672px">Overhead<br>Cost</div>
<!-- additional attributes -->
<svg style="left:778px;top:749px" width="5" height="6"><path d="M5 0V6H0Z" fill="#888"/></svg>
<div class="a" style="left:787px;top:746px;font-size:9.8px;color:#333">Additional Attributes</div>
<div class="bar" style="top:767px"><span>Multi Select Attributes</span></div>
<svg style="left:789px;top:772px" width="5" height="8"><path d="M0 0L4 4L0 8Z" fill="#888"/></svg>
<div class="bar" style="top:791px"><span>Assembly Details</span></div>
<svg style="left:789px;top:796px" width="5" height="8"><path d="M0 0L4 4L0 8Z" fill="#888"/></svg>
<div class="bar" style="top:815px"><span>Robot Component Details</span></div>
<svg style="left:788px;top:821px" width="6" height="6"><path d="M5 0V5H0Z" fill="#888"/></svg>
<!-- form -->
<div class="lb" style="left:780px;width:82px;top:846px">Device Weight</div>
<div class="inp" style="left:874px;top:844px;width:105px;height:16px"></div>
<div class="vl" style="left:954px;top:848px">122.00</div>
<div class="lb" style="left:780px;width:82px;top:868px">Device Weight UOM</div>
<div class="sel" style="left:874px;top:863px;width:31px;height:15px"></div>
<div class="vl" style="left:878px;top:866px">lb</div>
<div class="lb" style="left:1040px;width:62px;top:846px"><span style="border-bottom:1px dotted #888">Material</span></div>
<div class="sel" style="left:1113px;top:844px;width:53px;height:15px"></div>
<div class="vl" style="left:1118px;top:847px">Titanium</div>
<div class="lb" style="left:1040px;width:62px;top:868px"><span style="border-bottom:1px dotted #888">Model</span></div>
<div class="sel" style="left:1113px;top:863px;width:39px;height:15px"></div>
<div class="vl" style="left:1118px;top:866px">ORA-L</div>
<div class="lb" style="left:1240px;width:91px;top:842px">Max Gripping<br>Diameter (mm)</div>
<div class="sel" style="left:1342px;top:844px;width:28px;height:15px"></div>
<div class="lb" style="left:1240px;width:91px;top:864px"><span style="border-bottom:1px dotted #888">Max Pinching Force</span><br>(N)</div>
<div class="sel" style="left:1342px;top:864px;width:25px;height:14px"></div>
<div class="lb" style="left:1460px;width:100px;top:842px"><span style="border-bottom:1px dotted #888">Max Gripping Force</span><br>(N)</div>
<div class="sel" style="left:1571px;top:844px;width:29px;height:15px"></div>
<div class="lb" style="left:1460px;width:100px;top:867px">Rotation</div>
<div class="inp" style="left:1571px;top:863px;width:100px;height:16px"></div>
<div class="vl" style="left:1575px;top:867px">360</div>
<div class="a" style="left:1705px;top:838px;width:5px;height:40px;border-radius:3px;background:#c8c8c8"></div>
<svg style="left:1159px;top:847px" width="4" height="9"><path d="M0 3.5L2 0.5L4 3.5ZM0 5.5L2 8.5L4 5.5Z" fill="#444"/></svg>
<svg style="left:898px;top:866px" width="4" height="9"><path d="M0 3.5L2 0.5L4 3.5ZM0 5.5L2 8.5L4 5.5Z" fill="#444"/></svg>
<svg style="left:1146px;top:866px" width="4" height="9"><path d="M0 3.5L2 0.5L4 3.5ZM0 5.5L2 8.5L4 5.5Z" fill="#444"/></svg>
<svg style="left:1364px;top:847px" width="4" height="9"><path d="M0 3.5L2 0.5L4 3.5ZM0 5.5L2 8.5L4 5.5Z" fill="#444"/></svg>
<svg style="left:1361px;top:866px" width="4" height="9"><path d="M0 3.5L2 0.5L4 3.5ZM0 5.5L2 8.5L4 5.5Z" fill="#444"/></svg>
<svg style="left:1593px;top:847px" width="4" height="9"><path d="M0 3.5L2 0.5L4 3.5ZM0 5.5L2 8.5L4 5.5Z" fill="#444"/></svg>
<!-- op spec -->
<div class="bar" style="top:889px"><span>Operational Specifications</span></div>
<svg style="left:788px;top:894px" width="6" height="6"><path d="M5 0V5H0Z" fill="#888"/></svg>
<div class="vl" style="left:787px;top:909px;font-size:6.5px">Enter Operational Specifications</div>
<div class="vl" style="left:793px;top:925px">Actions</div>
<svg style="left:817px;top:927px" width="6" height="5"><path d="M0 0.5H5L2.5 4Z" fill="#333"/></svg>
<div class="vl" style="left:829px;top:925px">View</div>
<svg style="left:846px;top:927px" width="6" height="5"><path d="M0 0.5H5L2.5 4Z" fill="#333"/></svg>
<div class="vl" style="left:857px;top:925px">Format</div>
<svg style="left:881px;top:927px" width="6" height="5"><path d="M0 0.5H5L2.5 4Z" fill="#333"/></svg>
<svg style="left:900px;top:925px" width="9" height="9"><path d="M4.5 0.5V8.5M0.5 4.5H8.5" stroke="#666" stroke-width="1.8"/></svg>
<svg style="left:918px;top:925px" width="9" height="9"><path d="M1 1L8 8M8 1L1 8" stroke="#666" stroke-width="1.6"/></svg>
<svg style="left:935px;top:923px" width="9" height="11"><path d="M1 1H8V6M2.5 1V6M5.5 1V6M1 4H8M1 6V10H3" fill="none" stroke="#888" stroke-width=".9"/></svg>
<svg style="left:956px;top:923px" width="9" height="11"><path d="M1 1H8V4H1ZM1 4V10M6 6V10M4 8H8" fill="none" stroke="#888" stroke-width=".9"/></svg>
<svg style="left:974px;top:924px" width="8" height="9"><rect x=".5" y=".5" width="7" height="8" fill="none" stroke="#ddd" stroke-width=".9"/></svg>
<div class="vl" style="left:985px;top:925px;color:#bbb">Freeze</div>
<svg style="left:1015px;top:923px" width="9" height="10"><rect x=".5" y="2.5" width="7" height="7" fill="none" stroke="#999" stroke-width=".9"/><path d="M4 5L8 1" stroke="#999" stroke-width=".9"/></svg>
<div class="vl b" style="left:1027px;top:925px;color:#333">Detach</div>
<svg style="left:1060px;top:924px" width="7" height="9"><path d="M6 0.5V5H1M3 3L1 5L3 7" fill="none" stroke="#ccc" stroke-width=".9"/></svg>
<div class="vl" style="left:1070px;top:925px;color:#bbb">Wrap</div>
<div class="a" style="left:787px;top:938px;width:914px;height:1px;background:#ededed"></div>
<div class="a" style="left:795px;top:939px;width:1px;height:82px;background:#ededed"></div>
<div class="vl" style="left:798px;top:941px;color:#1a6fb0;font-size:8px">*</div>
<div class="vl b" style="left:798px;top:952px;font-size:7px;color:#222">Functional Specification</div>
<div class="vl b" style="left:919px;top:948px;font-size:6.8px;color:#222">Minimum</div>
<div class="vl b" style="left:1048px;top:948px;font-size:6.8px;color:#222">Maximum</div>
<div class="vl b" style="left:1177px;top:948px;font-size:6.8px;color:#222">Target</div>
<div class="vl b" style="left:1306px;top:948px;font-size:6.8px;color:#222">UoM</div>
<div class="a" style="left:787px;top:964px;width:637px;height:24px;background:#e4f0fc"></div>
<div class="a" style="left:787px;top:964px;width:8px;height:24px;background:#aac1d6"></div>
<div class="vl" style="left:799px;top:972px">Torque</div>
<div class="inp" style="left:919px;top:968px;width:105px;height:16px"></div>
<div class="vl" style="left:993px;top:972px">22.00000</div>
<div class="inp" style="left:1048px;top:968px;width:105px;height:16px"></div>
<div class="vl" style="left:1122px;top:972px">53.00000</div>
<div class="inp" style="left:1177px;top:968px;width:105px;height:16px"></div>
<div class="vl" style="left:1251px;top:972px">25.00000</div>
<div class="sel" style="left:1306px;top:968px;width:32px;height:15px"></div>
<div class="vl" style="left:1311px;top:971px">NM</div>
<svg style="left:1331px;top:971px" width="4" height="9"><path d="M0 3.5L2 0.5L4 3.5ZM0 5.5L2 8.5L4 5.5Z" fill="#444"/></svg>
<div class="vl" style="left:799px;top:993px">Temperature</div>
<div class="vl" style="left:919px;top:992px">1.00000</div>
<div class="vl" style="left:1048px;top:992px">111.00000</div>
<div class="vl" style="left:1177px;top:992px">17.00000</div>
<div class="vl" style="left:1306px;top:993px">°C</div>
<div class="a" style="left:787px;top:1005px;width:637px;height:1px;background:#f0f0f0"></div>
<div class="vl" style="left:799px;top:1010px">Vibration</div>
<div class="vl" style="left:919px;top:1009px">0.00500</div>
<div class="vl" style="left:1048px;top:1009px">0.03000</div>
<div class="vl" style="left:1177px;top:1009px">0.01000</div>
<div class="vl" style="left:1306px;top:1010px">m/s2</div>
</body></html>
